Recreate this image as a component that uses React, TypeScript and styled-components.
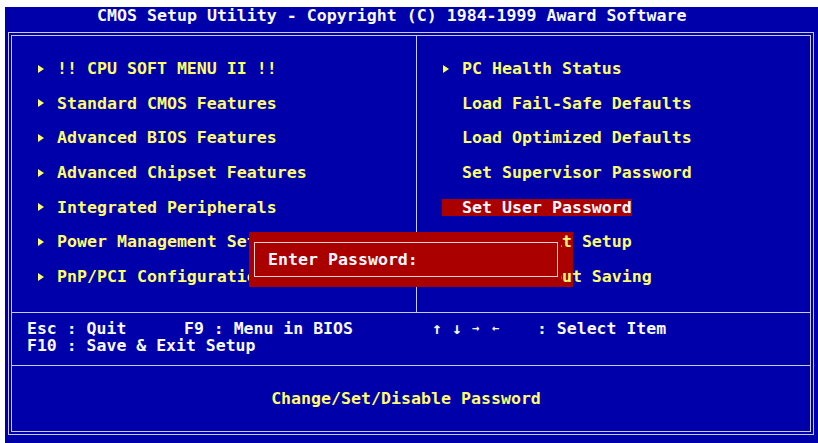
import React from "react";
import styled, { createGlobalStyle } from "styled-components";

const GlobalStyle = createGlobalStyle`
  html, body {
    margin: 0;
    padding: 0;
    background: #ffffff;
  }
  body {
    width: 818px;
    height: 443px;
    overflow: hidden;
  }
`;

const BLUE = "#0000aa";
const YELLOW = "#fcfc6c";
const WHITE = "#f8f8ff";
const RED = "#aa0000";
const LINE = "#c8c8f8";

const Styled = {
  Page: styled.div`
    padding: 7px 0 0 5px;
  `,
  Screen: styled.div`
    position: relative;
    width: 813px;
    height: 436px;
    background: ${BLUE};
    font-family: "DejaVu Sans Mono", "Liberation Mono", monospace;
    font-weight: bold;
    font-size: 16.6px;
    line-height: 17px;
    white-space: pre;
  `,
  Title: styled.div`
    height: 25px;
    padding-left: 92px;
    color: ${WHITE};
  `,
  Frame: styled.div`
    margin-left: 3px;
    width: 806px;
    height: 403px;
    box-sizing: border-box;
    border: 1px solid ${LINE};
    padding: 2px;
  `,
  Inner: styled.div`
    height: 100%;
    box-sizing: border-box;
    border: 1px solid ${LINE};
    display: grid;
    grid-template-rows: 277px 53px 1fr;
  `,
  Menu: styled.div`
    position: relative;
    z-index: 1;
    display: grid;
    grid-template-columns: 405px 1fr;
    border-bottom: 1px solid ${LINE};
  `,
  Column: styled.div<{ $divider?: boolean }>`
    display: flex;
    flex-direction: column;
    align-items: flex-start;
    gap: 17.33px;
    padding: 24px 0 0 25px;
    border-right: ${(p) => (p.$divider ? `1px solid ${LINE}` : "none")};
  `,
  Item: styled.div<{ $active?: boolean }>`
    display: flex;
    align-items: center;
    height: 17.33px;
    color: ${(p) => (p.$active ? WHITE : YELLOW)};
    background: ${(p) => (p.$active ? RED : "transparent")};
  `,
  ArrowSlot: styled.span`
    width: 20px;
    display: flex;
    align-items: center;
    padding-left: 1px;
    box-sizing: border-box;
  `,
  Triangle: styled.span`
    width: 0;
    height: 0;
    border-left: 6px solid ${YELLOW};
    border-top: 4.5px solid transparent;
    border-bottom: 4.5px solid transparent;
  `,
  Keys: styled.div`
    display: grid;
    grid-template-columns: 157px 248px 105px auto;
    align-content: start;
    padding: 7px 0 0 15px;
    font-size: 16.5px;
    line-height: 17px;
    color: ${WHITE};
    border-bottom: 1px solid ${LINE};
  `,
  KeyWide: styled.div`
    grid-column: 1 / -1;
  `,
  Arrows: styled.div`
    display: flex;
  `,
  Arrow: styled.span<{ $small?: boolean }>`
    width: 20px;
    font-size: ${(p) => (p.$small ? "12px" : "16.5px")};
  `,
  Help: styled.div`
    display: flex;
    align-items: center;
    justify-content: center;
    padding-right: 10px;
    color: ${YELLOW};
  `,
  // popup box, drawn over the menu
  Dialog: styled.div`
    position: absolute;
    z-index: 2;
    left: 244px;
    top: 225px;
    width: 312px;
    height: 55px;
    box-sizing: border-box;
    padding: 10px 3px 10px 5px;
    background: ${RED};
  `,
  // right-hand shadow column: recoloured cells, the text underneath still shows
  DialogShadow: styled.div`
    position: absolute;
    z-index: 0;
    left: 556px;
    top: 225px;
    width: 12px;
    height: 55px;
    background: ${RED};
  `,
  DialogBox: styled.div`
    height: 100%;
    box-sizing: border-box;
    border: 1px solid #f0d0d0;
    display: flex;
    align-items: center;
    padding-left: 13px;
    color: ${WHITE};
  `,
};

type Entry = { label: string; sub?: boolean; active?: boolean };

const leftMenu: Entry[] = [
  { label: "!! CPU SOFT MENU II !!", sub: true },
  { label: "Standard CMOS Features", sub: true },
  { label: "Advanced BIOS Features", sub: true },
  { label: "Advanced Chipset Features", sub: true },
  { label: "Integrated Peripherals", sub: true },
  { label: "Power Management Setup", sub: true },
  { label: "PnP/PCI Configurations", sub: true },
];

const rightMenu: Entry[] = [
  { label: "PC Health Status", sub: true },
  { label: "Load Fail-Safe Defaults" },
  { label: "Load Optimized Defaults" },
  { label: "Set Supervisor Password" },
  { label: "Set User Password", active: true },
  { label: "Save & Exit Setup" },
  { label: "Exit Without Saving" },
];

const MenuColumn = ({ items, divider }: { items: Entry[]; divider?: boolean }) => (
  <Styled.Column $divider={divider}>
    {items.map((it) => (
      <Styled.Item key={it.label} $active={it.active}>
        <Styled.ArrowSlot>{it.sub && <Styled.Triangle />}</Styled.ArrowSlot>
        {it.label}
      </Styled.Item>
    ))}
  </Styled.Column>
);

const App = () => {
  return (
    <Styled.Page>
      <GlobalStyle />
      <Styled.Screen>
        <Styled.DialogShadow />
        <Styled.Title>CMOS Setup Utility - Copyright (C) 1984-1999 Award Software</Styled.Title>
        <Styled.Frame>
          <Styled.Inner>
            <Styled.Menu>
              <MenuColumn items={leftMenu} divider />
              <MenuColumn items={rightMenu} />
            </Styled.Menu>
            <Styled.Keys>
              <div>Esc : Quit</div>
              <div>F9 : Menu in BIOS</div>
              <Styled.Arrows>
                <Styled.Arrow>↑</Styled.Arrow>
                <Styled.Arrow>↓</Styled.Arrow>
                <Styled.Arrow $small>→</Styled.Arrow>
                <Styled.Arrow $small>←</Styled.Arrow>
              </Styled.Arrows>
              <div>: Select Item</div>
              <Styled.KeyWide>F10 : Save &amp; Exit Setup</Styled.KeyWide>
            </Styled.Keys>
            <Styled.Help>Change/Set/Disable Password</Styled.Help>
          </Styled.Inner>
        </Styled.Frame>
        <Styled.Dialog>
          <Styled.DialogBox>Enter Password:</Styled.DialogBox>
        </Styled.Dialog>
      </Styled.Screen>
    </Styled.Page>
  );
};

export default App;
